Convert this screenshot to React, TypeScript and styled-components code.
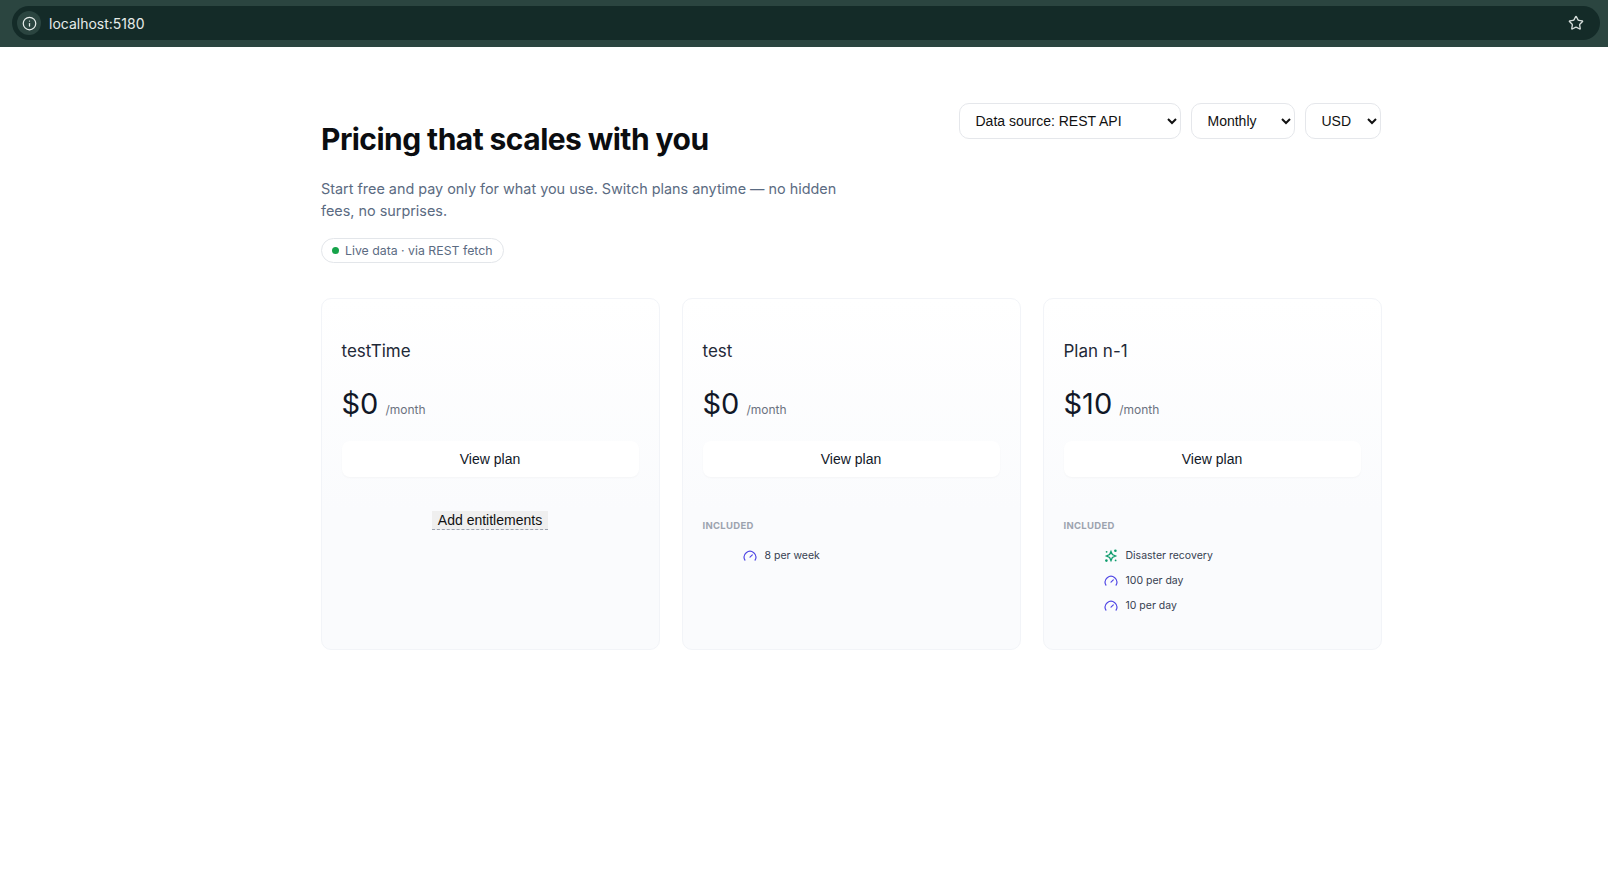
import styled, {createGlobalStyle} from "styled-components";
import {Gauge, Info, Star} from "lucide-react";
import React from "react";

const GlobalStyle = createGlobalStyle`
  html, body {
    margin: 0;
    padding: 0;
    background: #fff;
    font-family: Inter, "Liberation Sans", sans-serif;
  }
`;

const BrowserBar = styled.div`
  height: 47px;
  box-sizing: border-box;
  padding: 6px 8px 7px 12px;
  background-color: #2b4540;
`;

const UrlPill = styled.div`
  height: 34px;
  display: flex;
  align-items: center;
  padding: 0 16px 0 5px;
  border-radius: 17px;
  background-color: #142b28;
  color: #e6ecea;
  font-size: 14px;
`;

const InfoBadge = styled.span`
  width: 24px;
  height: 24px;
  margin-right: 8px;
  display: flex;
  align-items: center;
  justify-content: center;
  border-radius: 50%;
  background-color: #2b4540;
`;

const UrlText = styled.span`
  flex: 1;
`;

const Main = styled.main`
  padding: 56px 226.5px 0 320.5px;
`;

const Hero = styled.div`
  display: flex;
  justify-content: space-between;
  align-items: flex-start;
  margin-bottom: 35px;
`;

const Title = styled.h1`
  margin: 16px 0 0 0.5px;
  font-size: 30px;
  line-height: 40px;
  font-weight: 700;
  letter-spacing: -0.55px;
  color: #0b0d10;
`;

const Subtitle = styled.p`
  width: 530px;
  margin: 19px 0 0 0.5px;
  font-size: 14.4px;
  line-height: 22px;
  color: #5b6b82;
`;

const LiveTag = styled.div`
  width: fit-content;
  height: 25px;
  margin: 16px 0 0 0.5px;
  padding: 0 10px;
  display: flex;
  align-items: center;
  gap: 6px;
  box-sizing: border-box;
  border: 1px solid #e3e6ea;
  border-radius: 13px;
  font-size: 12.3px;
  color: #5b6b82;
`;

const LiveDot = styled.span`
  width: 7px;
  height: 7px;
  border-radius: 50%;
  background-color: #16a34a;
`;

const Controls = styled.div`
  display: flex;
  gap: 10px;
  margin-right: 1px;
`;

const Select = styled.select<{$width: number}>`
  width: ${props => props.$width}px;
  height: 36px;
  padding: 0 3px 0 12px;
  border: 1px solid #e5e7eb;
  border-radius: 10px;
  background-color: #fff;
  color: #111;
  font-family: "Liberation Sans", Arial, sans-serif;
  font-size: 14px;
`;

const Cards = styled.div`
  display: grid;
  grid-template-columns: repeat(3, 1fr);
  gap: 22px;
`;

const Card = styled.section`
  height: 352px;
  box-sizing: border-box;
  padding: 41px 20px 0;
  border: 1px solid #f2f4f8;
  border-radius: 10px;
  background: linear-gradient(180deg, #ffffff 0%, #fafbfd 60%);
`;

const PlanName = styled.div`
  font-size: 17px;
  line-height: 22px;
  color: #1f2937;
`;

const PriceRow = styled.div`
  margin-top: 23px;
  display: flex;
  align-items: baseline;
  gap: 7px;
`;

const Price = styled.span`
  font-size: 29px;
  line-height: 38px;
  color: #111827;
`;

const Period = styled.span`
  font-size: 12px;
  color: #6b7280;
`;

const ViewPlan = styled.button`
  display: block;
  width: 100%;
  height: 36px;
  margin-top: 18px;
  border: 0;
  border-radius: 8px;
  background-color: #fff;
  box-shadow: 0 1px 2px rgba(15, 23, 42, 0.03);
  color: #111827;
  font-family: "Liberation Sans", Arial, sans-serif;
  font-size: 14px;
`;

const AddRow = styled.div`
  margin-top: 32px;
  text-align: center;
`;

const AddButton = styled.button`
  height: 19px;
  padding: 0 6px;
  border: 0;
  border-bottom: 1px dashed #9ca3af;
  background-color: #efefef;
  color: #111;
  font-family: "Liberation Sans", Arial, sans-serif;
  font-size: 14px;
  line-height: 18px;
`;

const Included = styled.div`
  margin-top: 43px;
  font-size: 9.5px;
  line-height: 12px;
  font-weight: 700;
  letter-spacing: 0.3px;
  color: #9ca3af;
`;

const FeatureList = styled.ul`
  list-style: none;
  margin: 11px 0 0;
  padding: 0 0 0 40px;
`;

const Feature = styled.li`
  height: 25px;
  display: flex;
  align-items: center;
  gap: 8px;
  font-size: 10.5px;
  color: #374151;
`;

function Sparkle() {
    return (
        <svg width="14" height="14" viewBox="0 0 14 14" fill="#0f9d6e">
            <path d="M7 2.4 8.4 5.6 11.6 7 8.4 8.4 7 11.6 5.6 8.4 2.4 7 5.6 5.6Z" fill="none" stroke="#0f9d6e" strokeWidth="1.3"/>
            <circle cx="11.4" cy="1.8" r="1.3"/>
            <circle cx="2.4" cy="11.6" r="1.3"/>
            <circle cx="11.6" cy="11.4" r="0.9"/>
            <circle cx="2.6" cy="2.8" r="0.9"/>
        </svg>
    );
}

interface IFeature {
    label: string;
    kind: "meter" | "flag";
}

interface IPlan {
    name: string;
    price: number;
    features: IFeature[];
}

const plans: IPlan[] = [
    {name: "testTime", price: 0, features: []},
    {name: "test", price: 0, features: [{label: "8 per week", kind: "meter"}]},
    {
        name: "Plan n-1",
        price: 10,
        features: [
            {label: "Disaster recovery", kind: "flag"},
            {label: "100 per day", kind: "meter"},
            {label: "10 per day", kind: "meter"},
        ],
    },
];

function App() {
    return (
        <>
            <GlobalStyle/>
            <BrowserBar>
                <UrlPill>
                    <InfoBadge><Info size={15} color="#e6ecea"/></InfoBadge>
                    <UrlText>localhost:5180</UrlText>
                    <Star size={16} color="#d5dcda"/>
                </UrlPill>
            </BrowserBar>
            <Main>
                <Hero>
                    <div>
                        <Title>Pricing that scales with you</Title>
                        <Subtitle>
                            Start free and pay only for what you use. Switch plans anytime — no hidden fees, no surprises.
                        </Subtitle>
                        <LiveTag><LiveDot/>Live data · via REST fetch</LiveTag>
                    </div>
                    <Controls>
                        <Select $width={222} defaultValue="rest">
                            <option value="rest">Data source: REST API</option>
                        </Select>
                        <Select $width={104} defaultValue="monthly">
                            <option value="monthly">Monthly</option>
                        </Select>
                        <Select $width={76} defaultValue="usd">
                            <option value="usd">USD</option>
                        </Select>
                    </Controls>
                </Hero>
                <Cards>
                    {plans.map(plan => (
                        <Card key={plan.name}>
                            <PlanName>{plan.name}</PlanName>
                            <PriceRow>
                                <Price>${plan.price}</Price>
                                <Period>/month</Period>
                            </PriceRow>
                            <ViewPlan>View plan</ViewPlan>
                            {plan.features.length === 0 ? (
                                <AddRow><AddButton>Add entitlements</AddButton></AddRow>
                            ) : (
                                <>
                                    <Included>INCLUDED</Included>
                                    <FeatureList>
                                        {plan.features.map(feature => (
                                            <Feature key={feature.label}>
                                                {feature.kind === "flag"
                                                    ? <Sparkle/>
                                                    : <Gauge size={14} color="#4f46e5"/>}
                                                {feature.label}
                                            </Feature>
                                        ))}
                                    </FeatureList>
                                </>
                            )}
                        </Card>
                    ))}
                </Cards>
            </Main>
        </>
    );
}

export default App;
